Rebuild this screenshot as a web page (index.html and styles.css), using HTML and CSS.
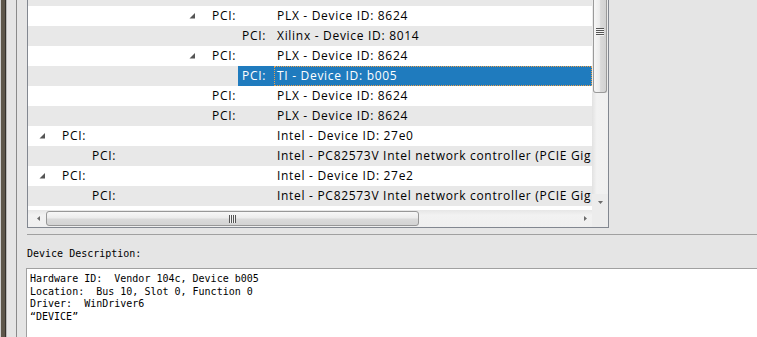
FILE: index.html
```html
<!DOCTYPE html>
<html lang="en">
<head>
    <meta charset="UTF-8">
    <title>Device Manager</title>
    <link rel="stylesheet" href="styles.css">
</head>
<body>
    <div class="window">
        <div class="edge"></div>
        <div class="main">
            <div class="tree">
                <div class="rows">
                    <div class="row l5"><div class="node"><span class="twisty"></span><span class="name">PCI:</span></div><span class="desc">PLX - Device ID: 8624</span></div>
                    <div class="row l5"><div class="node"><span class="twisty"><svg width="7" height="6" viewBox="0 0 7 6"><polygon points="6,0 6,5.5 0.5,5.5" fill="#555"/></svg></span><span class="name">PCI:</span></div><span class="desc">PLX - Device ID: 8624</span></div>
                    <div class="row l6"><div class="node"><span class="twisty"></span><span class="name">PCI:</span></div><span class="desc">Xilinx - Device ID: 8014</span></div>
                    <div class="row l5"><div class="node"><span class="twisty"><svg width="7" height="6" viewBox="0 0 7 6"><polygon points="6,0 6,5.5 0.5,5.5" fill="#555"/></svg></span><span class="name">PCI:</span></div><span class="desc">PLX - Device ID: 8624</span></div>
                    <div class="row l6 sel"><div class="node"><span class="twisty"></span><span class="name">PCI:</span></div><span class="desc">TI - Device ID: b005</span></div>
                    <div class="row l5"><div class="node"><span class="twisty"></span><span class="name">PCI:</span></div><span class="desc">PLX - Device ID: 8624</span></div>
                    <div class="row l5"><div class="node"><span class="twisty"></span><span class="name">PCI:</span></div><span class="desc">PLX - Device ID: 8624</span></div>
                    <div class="row l0"><div class="node"><span class="twisty"><svg width="7" height="6" viewBox="0 0 7 6"><polygon points="6,0 6,5.5 0.5,5.5" fill="#555"/></svg></span><span class="name">PCI:</span></div><span class="desc">Intel - Device ID: 27e0</span></div>
                    <div class="row l1"><div class="node"><span class="twisty"></span><span class="name">PCI:</span></div><span class="desc">Intel - PC82573V Intel network controller (PCIE Gig</span></div>
                    <div class="row l0"><div class="node"><span class="twisty"><svg width="7" height="6" viewBox="0 0 7 6"><polygon points="6,0 6,5.5 0.5,5.5" fill="#555"/></svg></span><span class="name">PCI:</span></div><span class="desc">Intel - Device ID: 27e2</span></div>
                    <div class="row l1"><div class="node"><span class="twisty"></span><span class="name">PCI:</span></div><span class="desc">Intel - PC82573V Intel network controller (PCIE Gig</span></div>
                </div>
                <div class="vscroll">
                    <div class="vthumb"><div class="vgrip"></div></div>
                    <div class="vtrack"></div>
                    <div class="sbtn"><svg width="5" height="3" viewBox="0 0 5 3"><polygon points="0,0 5,0 2.5,3" fill="#6b6b6b"/></svg></div>
                </div>
                <div class="hscroll">
                    <div class="sbtn left"><svg width="3" height="5" viewBox="0 0 3 5"><polygon points="3,0 3,5 0,2.5" fill="#6b6b6b"/></svg></div>
                    <div class="hthumb"><div class="hgrip"></div></div>
                    <div class="htrack"></div>
                    <div class="sbtn right"><svg width="3" height="5" viewBox="0 0 3 5"><polygon points="0,0 0,5 3,2.5" fill="#6b6b6b"/></svg></div>
                </div>
                <div class="corner"></div>
            </div>
            <div class="sep"></div>
            <div class="label">Device Description:</div>
            <div class="details">Hardware ID:  Vendor 104c, Device b005
Location:  Bus 10, Slot 0, Function 0
Driver:  WinDriver6
“DEVICE”</div>
        </div>
    </div>
</body>
</html>
```

FILE: styles.css
```css
* { margin: 0; padding: 0; box-sizing: border-box; }
html, body { width: 757px; height: 337px; overflow: hidden; }
body {
    background: #e5e5e5;
    font-family: 'Open Sans', 'Noto Sans', sans-serif;
    font-size: 12px;
    color: #000;
}
.window { display: flex; height: 100%; }
.edge {
    flex: none;
    width: 17px;
    border-right: 1px solid #8a8a8a;
    background: linear-gradient(to right, #cfcfcf 0 1px, #5e574b 1px 5px, #34312c 5px 6px, #b9b9b9 6px 7px, #e5e5e5 7px);
}
.main { flex: 1; min-width: 0; padding-left: 10px; display: flex; flex-direction: column; }

/* tree view */
.tree {
    width: 582px;
    margin-top: -15px;
    border: 1px solid #828790;
    background: #fff;
    display: grid;
    grid-template-columns: 564px 16px;
    grid-template-rows: 224px 17px;
}
.rows { overflow: hidden; }
.row { display: flex; height: 20px; line-height: 20px; white-space: nowrap; letter-spacing: 0.7px; }
.row:nth-child(odd) { background: #e8e8e8; }
.node { flex: none; width: 246px; display: flex; }
.twisty { flex: none; width: 30px; display: flex; align-items: center; padding-left: 11px; }
.name { flex: 1; padding-left: 4px; }
.desc { flex: 1; min-width: 0; padding-left: 3px; overflow: hidden; }
.l1 .node { padding-left: 30px; }
.l5 .node { padding-left: 150px; }
.l6 .node { padding-left: 180px; }
.sel .name, .sel .desc { background: #1f7bbe; color: #fff; }
.sel .desc { outline: 1px dotted #e9a04c; outline-offset: -1px; }

/* scrollbars */
.vscroll { display: flex; flex-direction: column; background: #ececec; }
.vthumb {
    height: 107px;
    margin: 0 1px;
    border: 1px solid #9a9a9a;
    border-top: none;
    border-radius: 0 0 3px 3px;
    background: linear-gradient(to right, #f6f6f6, #ececec 45%, #d9d9d9 55%, #d2d2d2);
    padding-top: 42px;
}
.vgrip {
    width: 8px;
    height: 8px;
    margin: 0 auto;
    background: repeating-linear-gradient(to bottom, #555 0 1px, #f4f4f4 1px 2px);
}
.vtrack { flex: 1; background: linear-gradient(to right, #e2e2e2, #f2f2f2 30%, #f0f0f0); }
.sbtn { flex: none; height: 16px; display: flex; align-items: center; justify-content: center; }
.hscroll { display: flex; background: linear-gradient(#e6e6e6, #f2f2f2 30%, #efefef); }
.hscroll .sbtn { width: 18px; height: auto; }
.hscroll .sbtn.left { padding-left: 2px; }
.hscroll .sbtn.right { width: 17px; padding-left: 4px; }
.hthumb {
    width: 373px;
    margin: 1px 0;
    border: 1px solid #979797;
    border-radius: 3px;
    background: linear-gradient(#f7f7f7, #ececec 45%, #dadada 55%, #d3d3d3);
    display: flex;
    align-items: center;
    justify-content: center;
}
.hgrip {
    width: 7px;
    height: 8px;
    background: repeating-linear-gradient(to right, #555 0 1px, #f4f4f4 1px 2px);
}
.htrack { flex: 1; }
.corner { background: #ececec; }

/* description */
.sep { margin-top: 6px; border-top: 1px solid #a0a0a0; }
.label {
    height: 33px;
    padding-top: 13px;
    font: 10px/12.6px 'DejaVu Sans Mono', monospace;
}
.details {
    flex: 1;
    margin-left: -1px;
    padding: 4px 3px;
    background: #fff;
    border-top: 1px solid #a0a0a0;
    border-left: 1px solid #a0a0a0;
    font: 10px/12.6px 'DejaVu Sans Mono', monospace;
    white-space: pre;
}
```
